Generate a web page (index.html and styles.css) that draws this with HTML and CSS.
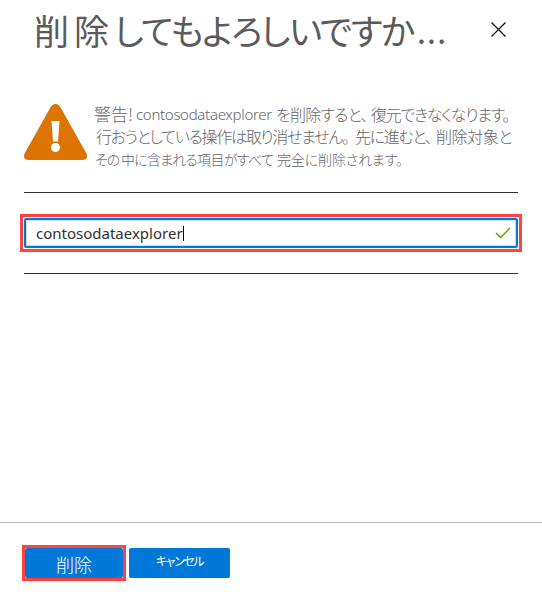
FILE: index.html
```html
<!DOCTYPE html>
<html lang="ja">
<head>
<meta charset="utf-8">
<title>削除の確認</title>
<link rel="stylesheet" href="styles.css">
</head>
<body>
<main class="dialog">
  <header class="header">
    <h1 class="title"><span class="kanji">削除</span><span class="kana">してもよろしいですか</span><span class="dots">...</span></h1>
    <svg class="close" width="15" height="15" viewBox="0 0 15 15" role="img" aria-label="閉じる"><path d="M.5.5l14 14M14.5.5l-14 14"/></svg>
  </header>
  <section class="content">
    <div class="warning">
      <svg class="warning-icon" width="63" height="57" viewBox="0 0 63 57"><path d="M27 2.5Q31.5-2.3 36 2.5L62.2 49Q65 56 58 56H5Q-2 56 .8 49Z" fill="#db7500"/><path d="M27.5 17h8l-1.5 20.5h-5z" fill="#fff"/><circle cx="31.5" cy="43.5" r="4.5" fill="#fff"/></svg>
      <div class="message">
        <p class="line first"><span>警告!</span><span class="name">contosodataexplorer</span><span>を削除すると、</span><span>復元できなくなります。</span></p>
        <p class="line second"><span>行おうとしている操作は取り消せません。</span><span>先に進むと、</span><span>削除対象と</span></p>
        <p class="line third"><span>その</span><span>中に</span><span>含まれる</span><span>項目がすべて</span><span>完全に削除されます。</span></p>
      </div>
    </div>
    <div class="highlight field-highlight">
      <div class="field"><span class="value">contosodataexplorer</span><span class="caret"></span><svg class="check" width="16" height="12" viewBox="0 0 16 12"><path d="M1 6l4.5 4.5L15 1"/></svg></div>
    </div>
  </section>
  <footer class="footer">
    <div class="highlight button-highlight"><button class="button delete">削除</button></div>
    <button class="button cancel">キャンセル</button>
  </footer>
</main>
</body>
</html>
```
FILE: styles.css
```css
* { box-sizing: border-box; }
body { margin: 0; background: #fff; font-family: "Noto Sans CJK JP", sans-serif; }
.dialog { height: 599px; display: flex; flex-direction: column; }
.header { height: 104px; display: flex; justify-content: space-between; padding: 1px 36px 0 34px; }
.title { display: flex; margin: 0; color: #5b5b5d; font-size: 35px; font-weight: 400; line-height: 58px; white-space: nowrap; font-feature-settings: "palt"; }
.title span { text-align: justify; text-align-last: justify; }
.kanji { width: 75px; }
.kana { width: 299px; margin-left: 5px; letter-spacing: -2px; }
.title .dots { margin-left: 4px; font-size: 32px; letter-spacing: 1.2px; text-align-last: left; }
.close { margin-top: 21px; fill: none; stroke: #111; stroke-width: 1.3; }
.content { height: 418px; padding: 0 24px; }
.warning { display: flex; height: 89px; border-bottom: 1px solid #323130; }
.warning-icon { flex: none; }
.message { margin: -1px 0 0 7px; color: #65656b; font-size: 16px; font-weight: 300; font-feature-settings: "palt"; }
.line { display: flex; margin: 0; height: 22px; line-height: 22px; letter-spacing: -1.3px; white-space: nowrap; }
.line span { flex: none; text-align: justify; text-align-last: justify; }
.line.first span:nth-child(1) { width: 39px; font-size: 17px; letter-spacing: 0; text-align-last: left; }
.line.first .name { width: 135px; margin-left: 3px; font-family: "Noto Sans"; font-size: 15px; letter-spacing: -.3px; text-align-last: left; }
.first span:nth-child(3) { width: 91px; margin-left: 5px; }
.first span:nth-child(4) { width: 138px; margin-left: 4px; }
.second { padding-left: 2px; }
.second span:nth-child(1) { width: 252px; }
.second span:nth-child(2) { width: 74px; margin-left: 7px; }
.second span:nth-child(3) { width: 75px; margin-left: 7px; }
.third { padding-left: 1px; font-size: 14px; height: 24px; line-height: 24px; letter-spacing: -.9px; }
.third span:nth-child(1) { width: 22px; }
.third span:nth-child(2) { width: 23px; margin-left: 4px; }
.third span:nth-child(3) { width: 46px; margin-left: 3px; }
.third span:nth-child(4) { width: 76px; margin-left: 4px; }
.third span:nth-child(5) { width: 125px; margin-left: 4px; }
.highlight { border: 3px solid #ff4343; }
.field-highlight { position: relative; height: 38px; margin: 21px -4px 0; padding: 1px; }
.field-highlight::after { content: ""; position: absolute; left: 1px; right: 1px; top: 56px; height: 1px; background: #323130; }
.field { height: 30px; display: flex; align-items: center; padding: 0 5px 0 10px; border: 2px solid #0078d4; border-radius: 2px; box-shadow: inset 0 0 0 1px #c7e0f4; }
.value { width: 147px; font-family: "Noto Sans"; font-size: 15px; color: #323130; white-space: nowrap; }
.caret { width: 1px; height: 15px; background: #000; }
.check { margin-left: auto; fill: none; stroke: #57a300; stroke-width: 1.3; }
.footer { display: flex; align-items: flex-start; height: 77px; border-top: 1px solid #b9b9b9; padding: 22px 22px 0; }
.button-highlight { width: 104px; height: 36px; }
.button { display: block; height: 30px; padding: 0; border: 0; border-radius: 2px; background: #0078d7; color: #fff; font-family: inherit; font-weight: 300; }
.delete { width: 98px; font-size: 18px; line-height: 33px; }
.cancel { width: 101px; margin: 3px 0 0 3px; padding-bottom: 5px; font-size: 12px; font-weight: 400; letter-spacing: -1.4px; font-feature-settings: "palt"; }
```
